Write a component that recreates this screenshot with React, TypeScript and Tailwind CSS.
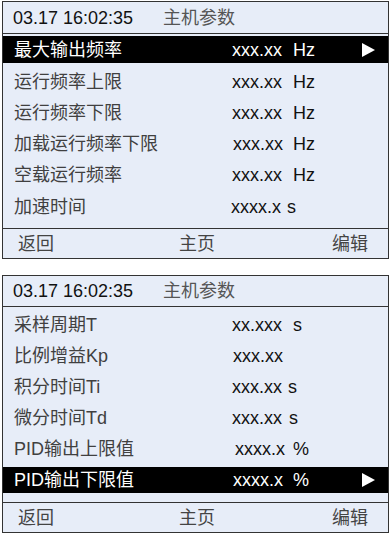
import React from "react";

type Row = {
  label: string;
  value: string;
  unit?: string;
  // value cell: left padding + width so the unit lands on its column
  cell: string;
  active?: boolean;
};

const page1: Row[] = [
  { label: "最大输出频率", value: "xxx.xx", unit: "Hz", cell: "w-[61px]", active: true },
  { label: "运行频率上限", value: "xxx.xx", unit: "Hz", cell: "w-[61px]" },
  { label: "运行频率下限", value: "xxx.xx", unit: "Hz", cell: "w-[61px]" },
  { label: "加载运行频率下限", value: "xxx.xx", unit: "Hz", cell: "w-[61px] pl-[1px]" },
  { label: "空载运行频率", value: "xxx.xx", unit: "Hz", cell: "w-[61px]" },
  { label: "加速时间", value: "xxxx.x", unit: "s", cell: "w-[56px] -ml-[1px]" },
];

const page2: Row[] = [
  { label: "采样周期T", value: "xx.xxx", unit: "s", cell: "w-[61px]" },
  { label: "比例增益Kp", value: "xxx.xx", cell: "w-[61px] pl-[1px]" },
  { label: "积分时间Ti", value: "xxx.xx", unit: "s", cell: "w-[56px]" },
  { label: "微分时间Td", value: "xxx.xx", unit: "s", cell: "w-[57px]" },
  { label: "PID输出上限值", value: "xxxx.x", unit: "%", cell: "w-[61px] pl-[3px]" },
  { label: "PID输出下限值", value: "xxxx.x", unit: "%", cell: "w-[61px] pl-[1px]", active: true },
];

function Arrow() {
  return (
    <svg width="13" height="14" viewBox="0 0 13 14" className="mr-[13px]">
      <polygon points="0,0 13,7 0,14" fill="#fff" />
    </svg>
  );
}

function ParamRow({ row, height }: { row: Row; height: string }) {
  return (
    <div
      className={`flex items-center ${height} ${
        row.active ? "bg-black text-white" : "text-[#111]"
      }`}
    >
      <div
        className={`w-[229px] pl-[11px] ${
          row.active ? "text-white" : "text-[#404040]"
        }`}
      >
        {row.label}
      </div>
      <div className={row.cell}>{row.value}</div>
      <div className="flex-1">{row.unit}</div>
      {row.active && <Arrow />}
    </div>
  );
}

function Header() {
  return (
    <div className="flex items-center border-b border-[#333]">
      <span className="w-[160px] pl-[10px] text-[#111]">03.17 16:02:35</span>
      <span className="text-[#555]">主机参数</span>
    </div>
  );
}

function Footer() {
  return (
    <div className="flex h-[30px] items-center border-t border-[#333] text-[#444]">
      <span className="w-[176px] pl-[15px]">返回</span>
      <span className="flex-1">主页</span>
      <span className="pr-[20px]">编辑</span>
    </div>
  );
}

export default function App() {
  return (
    <div
      className="h-[534px] w-[390px] bg-white pl-[2px] pt-[1px] text-[18px] leading-none"
      style={{ fontFamily: '"Liberation Sans", "Noto Sans CJK SC", sans-serif' }}
    >
      {/* page 1 */}
      <div className="flex h-[258px] w-[387px] flex-col border border-[#333] bg-[#e7edf8]">
        <div className="h-[33px] [&>div]:h-[32px]">
          <Header />
        </div>
        <div className="mt-[1px]">
          <ParamRow row={page1[0]} height="h-[27px]" />
        </div>
        <div className="mt-[3px] flex-1">
          {page1.slice(1, 5).map((r) => (
            <ParamRow key={r.label} row={r} height="h-[31px]" />
          ))}
          <ParamRow row={page1[5]} height="h-[34px]" />
        </div>
        <Footer />
      </div>

      {/* page 2 */}
      <div className="mt-[16px] flex h-[258px] w-[387px] flex-col border border-[#333] bg-[#e7edf8]">
        <div className="h-[31px] [&>div]:h-[31px]">
          <Header />
        </div>
        <div className="mt-[2px]">
          {page2.slice(0, 5).map((r) => (
            <ParamRow key={r.label} row={r} height="h-[31px]" />
          ))}
        </div>
        <div className="mt-[3px] flex-1">
          <ParamRow row={page2[5]} height="h-[26px]" />
        </div>
        <Footer />
      </div>
    </div>
  );
}
